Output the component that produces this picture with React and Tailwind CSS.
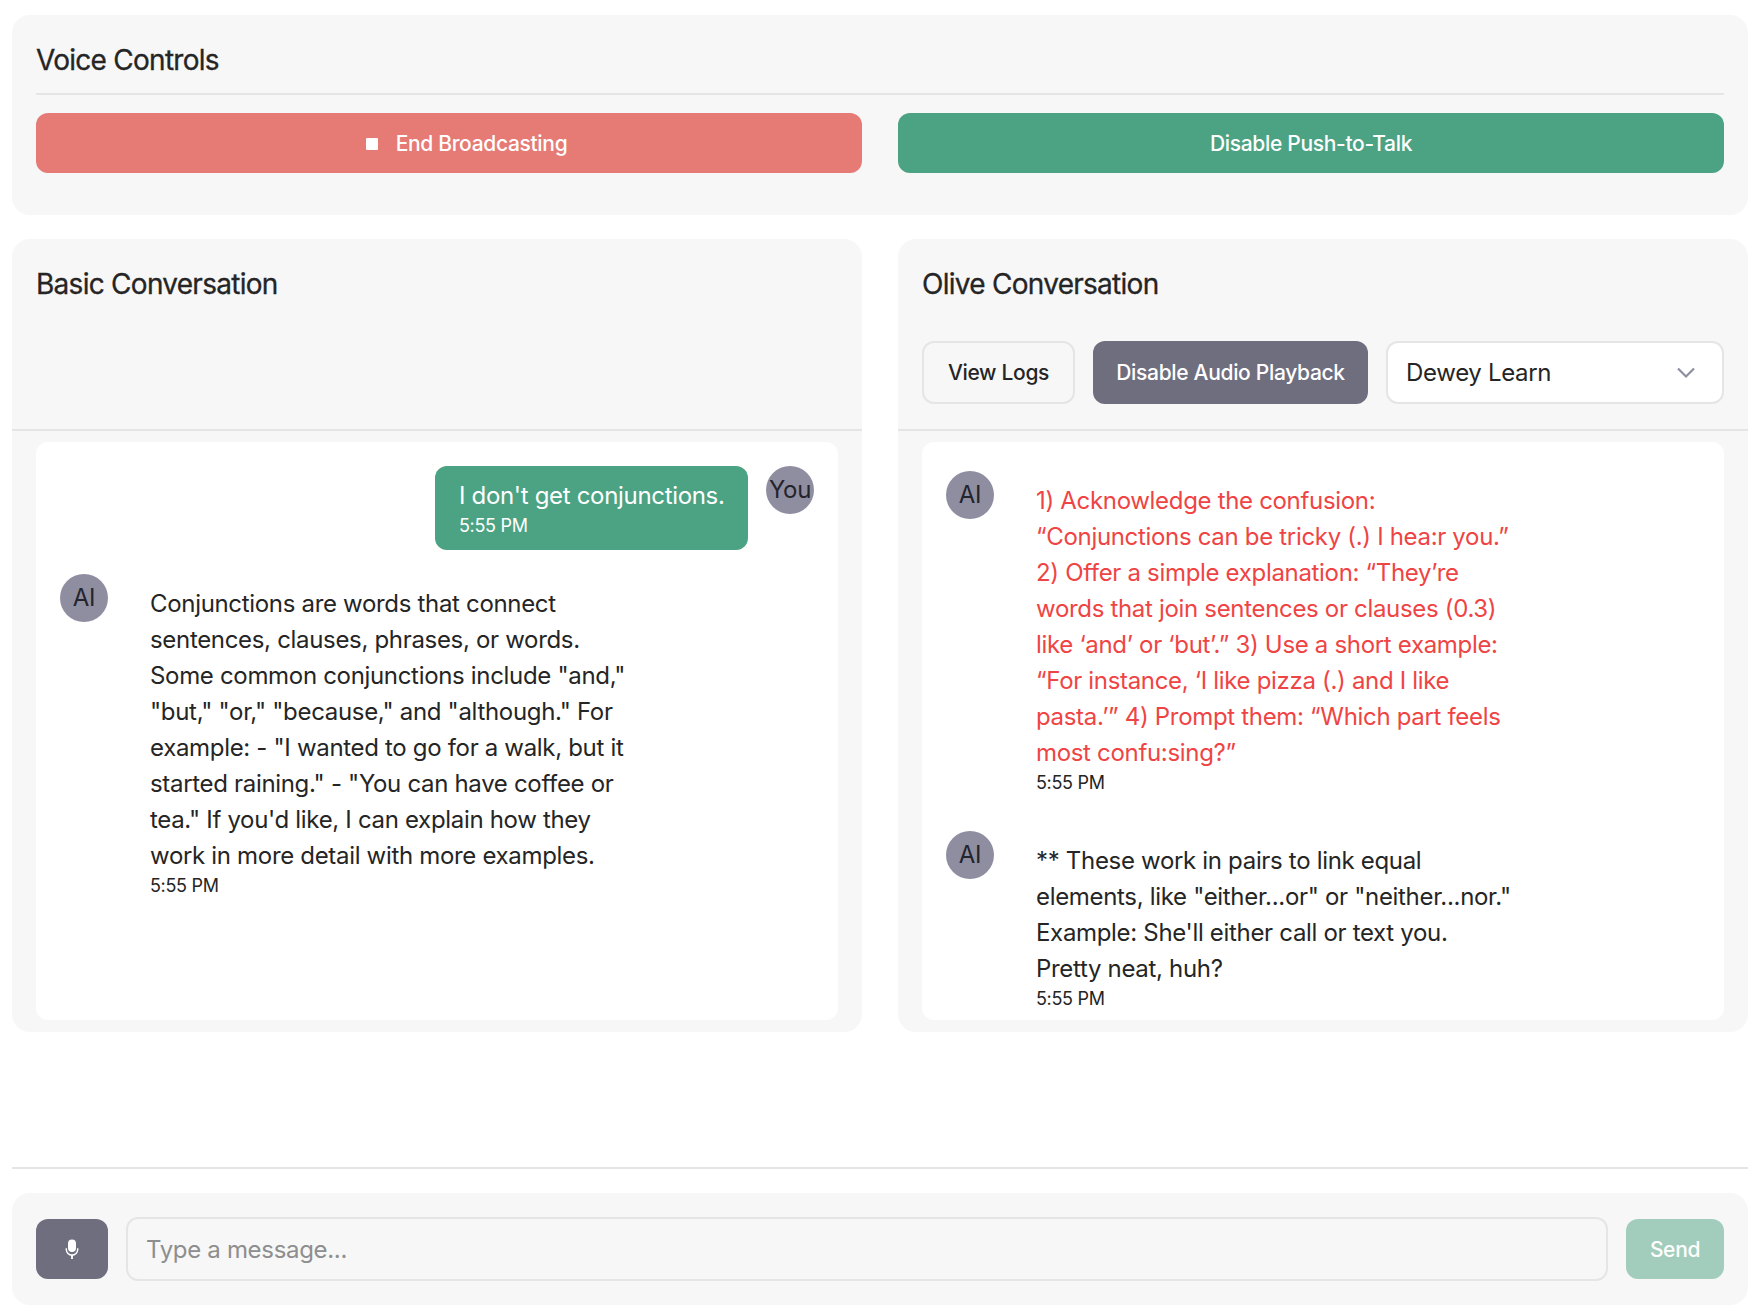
const font = { fontFamily: 'Inter, "Liberation Sans", sans-serif' };

function Avatar({ label }) {
  return (
    <div className="w-12 h-12 shrink-0 rounded-full bg-[#8f8ea1] flex items-center justify-center text-[24px] leading-9 text-[#24242c]">
      {label}
    </div>
  );
}

function Bot({ lines, red }) {
  return (
    <div className="flex gap-[18px] items-start">
      <Avatar label="AI" />
      <div className="w-[528px] px-6 py-3">
        <div className={`text-[24px] leading-9 whitespace-pre ${red ? "text-[#ef4444]" : "text-[#252525]"}`}>{lines.join("\n")}</div>
        <div className="text-[18px] leading-6 text-[#252525]">5:55 PM</div>
      </div>
    </div>
  );
}

function Panel({ title, children, head }) {
  return (
    <section className="flex-1 h-[793px] bg-[#f7f7f7] rounded-[18px] flex flex-col overflow-hidden">
      <div className="h-[192px] shrink-0 border-b-2 border-[#e5e5e5] px-6 pt-6">
        <h2 className="text-[28px] leading-[42px] font-normal tracking-[-0.026em] text-[#252525] [-webkit-text-stroke:0.3px_#252525]">{title}</h2>
        {head}
      </div>
      <div className="mx-6 mt-[11px] mb-3 flex-1 bg-white rounded-[12px] overflow-hidden">{children}</div>
    </section>
  );
}

export default function App() {
  return (
    <div style={font} className="w-[1762px] h-[1311px] bg-white px-3 pt-[15px] box-border tracking-[-0.02em]">
      <div className="w-[1736px]">
        <section className="h-[200px] bg-[#f7f7f7] rounded-[18px] px-6 pt-6">
          <h2 className="text-[28px] leading-[42px] font-normal tracking-[-0.026em] text-[#252525] [-webkit-text-stroke:0.3px_#252525] pb-[12px] border-b-2 border-[#e5e5e5] h-[56px]">Voice Controls</h2>
          <div className="grid grid-cols-2 gap-9 mt-[18px]">
            <button className="h-[60px] rounded-[12px] bg-[#e67a75] text-white text-[21px] font-medium flex items-center justify-center gap-[18px] pl-[35px] pt-px">
              <span className="w-3 h-3 bg-white rounded-[1px]" />
              End Broadcasting
            </button>
            <button className="h-[60px] rounded-[12px] bg-[#4ba383] text-white text-[21px] font-medium flex items-center justify-center pt-px">
              Disable Push-to-Talk
            </button>
          </div>
        </section>

        <div className="flex gap-9 mt-6">
          <Panel title="Basic Conversation">
            <div className="px-6 pt-6 flex flex-col gap-6">
              <div className="flex justify-end gap-[18px] items-start">
                <div className="w-[313px] rounded-[12px] bg-[#4ba383] text-white px-6 py-3 whitespace-nowrap">
                  <div className="text-[24px] leading-9">I don't get conjunctions.</div>
                  <div className="text-[18px] leading-6">5:55 PM</div>
                </div>
                <Avatar label="You" />
              </div>
              <Bot lines={[
                "Conjunctions are words that connect",
                "sentences, clauses, phrases, or words.",
                "Some common conjunctions include \"and,\"",
                "\"but,\" \"or,\" \"because,\" and \"although.\" For",
                "example: - \"I wanted to go for a walk, but it",
                "started raining.\" - \"You can have coffee or",
                "tea.\" If you'd like, I can explain how they",
                "work in more detail with more examples.",
              ]} />
            </div>
          </Panel>
          <Panel title="Olive Conversation" head={
            <div className="flex gap-[18px] mt-[36px]">
              <button className="w-[153px] h-[63px] rounded-[12px] border-2 border-[#e5e5e5] text-[21px] font-medium text-[#252525] pt-px">View Logs</button>
              <button className="w-[275px] h-[63px] rounded-[12px] bg-[#6f6e7f] text-[21px] font-medium text-white pt-px">Disable Audio Playback</button>
              <div className="flex-1 h-[63px] rounded-[12px] border-2 border-[#e5e5e5] bg-white flex items-center justify-between pl-[18px] pr-[27px]">
                <span className="text-[24px] font-normal text-[#252525] pt-px">Dewey Learn</span>
                <svg width="18" height="12" viewBox="0 0 18 12" fill="none" stroke="#8f8ea1" strokeWidth="2.2"><path d="M1 1.5l8 8 8-8" /></svg>
              </div>
            </div>
          }>
            <div className="px-6 pt-[29px] flex flex-col gap-6">
              <Bot red lines={[
                "1) Acknowledge the confusion:",
                "“Conjunctions can be tricky (.) I hea:r you.”",
                "2) Offer a simple explanation: “They’re",
                "words that join sentences or clauses (0.3)",
                "like ‘and’ or ‘but’.” 3) Use a short example:",
                "“For instance, ‘I like pizza (.) and I like",
                "pasta.’” 4) Prompt them: “Which part feels",
                "most confu:sing?”",
              ]} />
              <Bot lines={[
                "** These work in pairs to link equal",
                "elements, like \"either...or\" or \"neither...nor.\"",
                "Example: She'll either call or text you.",
                "Pretty neat, huh?",
              ]} />
            </div>
          </Panel>
        </div>

        <div className="mt-[135px] border-t-2 border-[#e5e5e5]" />

        <section className="mt-6 h-[112px] bg-[#f7f7f7] rounded-[18px] flex items-center px-6 gap-[18px]">
          <button className="w-[72px] h-[60px] rounded-[12px] bg-[#6f6e7f] flex items-center justify-center">
            <svg width="18" height="21" viewBox="0 0 18 21" fill="#fff"><rect x="5" y="0.5" width="8" height="12.5" rx="4" /><path d="M2.6 9.3v1.2a6.4 6.4 0 0 0 12.8 0V9.3H14v1.2a5 5 0 0 1-10 0V9.3z" /><rect x="8.1" y="15.5" width="1.8" height="4.5" /></svg>
          </button>
          <div className="flex-1 h-16 rounded-[12px] border-2 border-[#e5e5e5] flex items-center px-[18px] pt-[2px] text-[24px] text-[#8e8e8e]">Type a message...</div>
          <button className="w-[98px] h-[60px] rounded-[12px] bg-[#a2cdbc] text-white text-[21px] font-medium pt-px">Send</button>
        </section>
      </div>
    </div>
  );
}
